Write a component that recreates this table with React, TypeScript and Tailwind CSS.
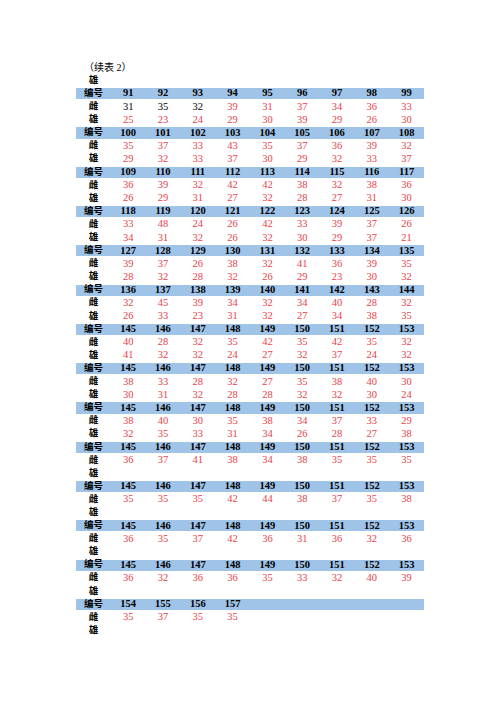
type Group = { ids: number[]; female: number[]; male: number[] }

const range = (a: number, b: number) => Array.from({ length: b - a + 1 }, (_, i) => a + i)

const groups: Group[] = [
  { ids: range(91, 99), female: [31, 35, 32, 39, 31, 37, 34, 36, 33], male: [25, 23, 24, 29, 30, 39, 29, 26, 30] },
  { ids: range(100, 108), female: [35, 37, 33, 43, 35, 37, 36, 39, 32], male: [29, 32, 33, 37, 30, 29, 32, 33, 37] },
  { ids: range(109, 117), female: [36, 39, 32, 42, 42, 38, 32, 38, 36], male: [26, 29, 31, 27, 32, 28, 27, 31, 30] },
  { ids: range(118, 126), female: [33, 48, 24, 26, 42, 33, 39, 37, 26], male: [34, 31, 32, 26, 32, 30, 29, 37, 21] },
  { ids: range(127, 135), female: [39, 37, 26, 38, 32, 41, 36, 39, 35], male: [28, 32, 28, 32, 26, 29, 23, 30, 32] },
  { ids: range(136, 144), female: [32, 45, 39, 34, 32, 34, 40, 28, 32], male: [26, 33, 23, 31, 32, 27, 34, 38, 35] },
  { ids: range(145, 153), female: [40, 28, 32, 35, 42, 35, 42, 35, 32], male: [41, 32, 32, 24, 27, 32, 37, 24, 32] },
  { ids: range(145, 153), female: [38, 33, 28, 32, 27, 35, 38, 40, 30], male: [30, 31, 32, 28, 28, 32, 32, 30, 24] },
  { ids: range(145, 153), female: [38, 40, 30, 35, 38, 34, 37, 33, 29], male: [32, 35, 33, 31, 34, 26, 28, 27, 38] },
  { ids: range(145, 153), female: [36, 37, 41, 38, 34, 38, 35, 35, 35], male: [] },
  { ids: range(145, 153), female: [35, 35, 35, 42, 44, 38, 37, 35, 38], male: [] },
  { ids: range(145, 153), female: [36, 35, 37, 42, 36, 31, 36, 32, 36], male: [] },
  { ids: range(145, 153), female: [36, 32, 36, 36, 35, 33, 32, 40, 39], male: [] },
  { ids: range(154, 157), female: [35, 37, 35, 35], male: [] },
]

const font = { fontFamily: '"Liberation Serif", "Noto Sans CJK SC", serif' }

function Row({
  label,
  values,
  header,
  blackCount = 0,
}: {
  label: string
  values: number[]
  header?: boolean
  blackCount?: number
}) {
  const cells = Array.from({ length: 9 }, (_, i) => values[i])
  return (
    <div
      className={`grid grid-cols-10 h-[13.1px] items-center text-[10.5px] leading-none ${
        header ? 'bg-[#9fc4e8] border-y border-white font-bold text-black' : ''
      }`}
    >
      <div className="text-center font-bold text-[9.5px] text-black">{label}</div>
      {cells.map((v, i) => (
        <div
          key={i}
          className={`text-center ${header || i < blackCount ? 'text-black' : 'text-[#e8414a]'}`}
        >
          {v ?? ''}
        </div>
      ))}
    </div>
  )
}

export default function App() {
  return (
    <div className="w-[500px] h-[708px] bg-white pt-[61px]" style={font}>
      <div className="w-[348px] ml-[76px]">
        <div className="h-[13.1px] flex items-center pl-[8px] text-[10px] text-black">（续表 2）</div>
        <Row label="雄" values={[]} />
        {groups.map((g, gi) => (
          <div key={gi}>
            <Row label="编号" values={g.ids} header />
            <Row label="雌" values={g.female} blackCount={gi === 0 ? 3 : 0} />
            <Row label="雄" values={g.male} />
          </div>
        ))}
      </div>
    </div>
  )
}
